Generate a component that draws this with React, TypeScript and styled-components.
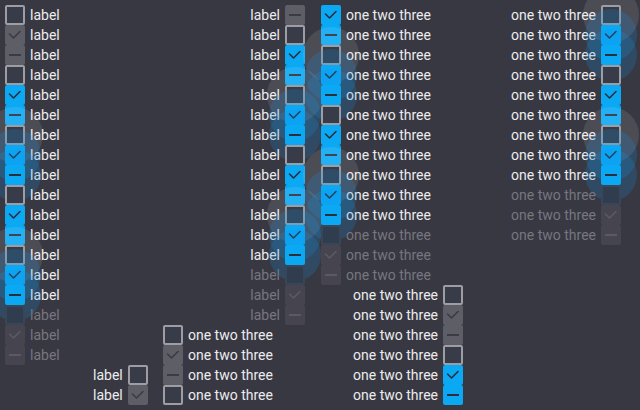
import React from "react";
import styled, { createGlobalStyle, css } from "styled-components";

type Check = "un" | "on" | "part";

interface Item {
  check: Check;
  gray: boolean;
  halo: boolean;
  disabled: boolean;
}

const GlobalStyle = createGlobalStyle`
  html, body {
    margin: 0;
    padding: 0;
    background: #383842;
  }
  body {
    font-family: Roboto, "Noto Sans", sans-serif;
    font-size: 14px;
    color: #e8e8ea;
  }
`;

// the 18 states every widget shows: off, normal, hover, pressed, focus, disabled
const items: Item[] = Array.from({ length: 18 }, (_, i) => {
  const g = Math.floor(i / 3);
  return {
    check: (["un", "on", "part"] as Check[])[i % 3],
    gray: g === 0,
    halo: g === 2 || g === 4,
    disabled: g === 5,
  };
});

const Board = styled.div`
  display: grid;
  grid-template-columns: 88px 70px 88px 54px 16px 32px 110px 48px 110px;
  grid-template-rows: repeat(20, 20px);
  padding: 5px;
  width: 640px;
  height: 410px;
  box-sizing: border-box;
  overflow: hidden;
`;

const Group = styled.div<{ $col: string; $row: string; $end?: boolean }>`
  grid-column: ${(p) => p.$col};
  grid-row: ${(p) => p.$row};
  justify-self: ${(p) => (p.$end ? "end" : "start")};
  display: flex;
  flex-direction: column;
  align-items: ${(p) => (p.$end ? "flex-end" : "flex-start")};
`;

const Cell = styled.div`
  position: relative;
  display: flex;
  align-items: center;
  gap: 5px;
  height: 20px;
  white-space: nowrap;
`;

const Label = styled.span<{ $disabled: boolean }>`
  line-height: 20px;
  color: ${(p) => (p.$disabled ? "#77767f" : "#ececee")};
`;

const Halo = styled.span<{ $right: boolean; $blue: boolean }>`
  position: absolute;
  top: 50%;
  width: ${(p) => (p.$blue ? 52 : 56)}px;
  height: ${(p) => (p.$blue ? 52 : 56)}px;
  margin-top: ${(p) => (p.$blue ? -26 : -28)}px;
  ${(p) =>
    p.$right
      ? css`right: ${p.$blue ? -16 : -18}px;`
      : css`left: ${p.$blue ? -16 : -18}px;`}
  border-radius: 50%;
  background: ${(p) =>
    p.$blue ? "rgba(20, 150, 235, 0.2)" : "rgba(255, 255, 255, 0.1)"};
  pointer-events: none;
`;

const boxFill = (it: Item) => {
  if (it.disabled) return it.check === "un" ? "#2f3d4e" : "#46454f";
  if (it.check === "un") return "#383b48";
  return it.gray ? "#5e5e67" : "#0ba8f4";
};

const Box = styled.span<{ $item: Item }>`
  position: relative;
  flex: none;
  width: 20px;
  height: 20px;
  box-sizing: border-box;
  border-radius: 2px;
  background: ${(p) => boxFill(p.$item)};
  border: ${(p) =>
    p.$item.check !== "un"
      ? "none"
      : p.$item.disabled
      ? "2px solid #394657"
      : "2px solid #9d9da3"};
  display: flex;
  align-items: center;
  justify-content: center;

  svg {
    display: block;
  }
`;

const Mark: React.FC<{ item: Item }> = ({ item }) => {
  const color = item.disabled ? "#5b5a64" : item.gray ? "#3b3b45" : "#2b2f3c";
  if (item.check === "on")
    return (
      <svg width="20" height="20" viewBox="0 0 20 20">
        <polyline
          points="4.5,9 8.5,13 15,6.5"
          fill="none"
          stroke={color}
          strokeWidth="1.6"
          strokeLinecap="round"
          strokeLinejoin="round"
        />
      </svg>
    );
  if (item.check === "part")
    return (
      <svg width="20" height="20" viewBox="0 0 20 20">
        <line x1="4" y1="10" x2="16" y2="10" stroke={color} strokeWidth="2" />
      </svg>
    );
  return null;
};

const CheckRow: React.FC<{ item: Item; text: string; boxRight?: boolean }> = ({
  item,
  text,
  boxRight,
}) => {
  const box = (
    <Box $item={item}>
      <Mark item={item} />
    </Box>
  );
  const label = <Label $disabled={item.disabled}>{text}</Label>;
  return (
    <Cell>
      {item.halo && <Halo $right={!!boxRight} $blue={item.check !== "un"} />}
      {boxRight ? (
        <>
          {label}
          {box}
        </>
      ) : (
        <>
          {box}
          {label}
        </>
      )}
    </Cell>
  );
};

const Stack: React.FC<{ from: number; to: number; text: string; boxRight?: boolean }> = ({
  from,
  to,
  text,
  boxRight,
}) => (
  <>
    {items.slice(from, to).map((it, i) => (
      <CheckRow key={from + i} item={it} text={text} boxRight={boxRight} />
    ))}
  </>
);

const App: React.FC = () => (
  <>
    <GlobalStyle />
    <Board>
      <Group $col="1 / 3" $row="1 / 19">
        <Stack from={0} to={18} text="label" />
      </Group>
      <Group $col="2 / 3" $row="19 / 21">
        <Stack from={0} to={2} text="label" boxRight />
      </Group>
      <Group $col="3 / 6" $row="17 / 21">
        <Stack from={0} to={4} text="one two three" />
      </Group>
      <Group $col="4 / 5" $row="1 / 17" $end>
        <Stack from={2} to={18} text="label" boxRight />
      </Group>
      <Group $col="6 / 9" $row="1 / 15">
        <Stack from={4} to={18} text="one two three" />
      </Group>
      <Group $col="6 / 8" $row="15 / 21" $end>
        <Stack from={0} to={6} text="one two three" boxRight />
      </Group>
      <Group $col="8 / 10" $row="1 / 13" $end>
        <Stack from={6} to={18} text="one two three" boxRight />
      </Group>
    </Board>
  </>
);

export default App;
